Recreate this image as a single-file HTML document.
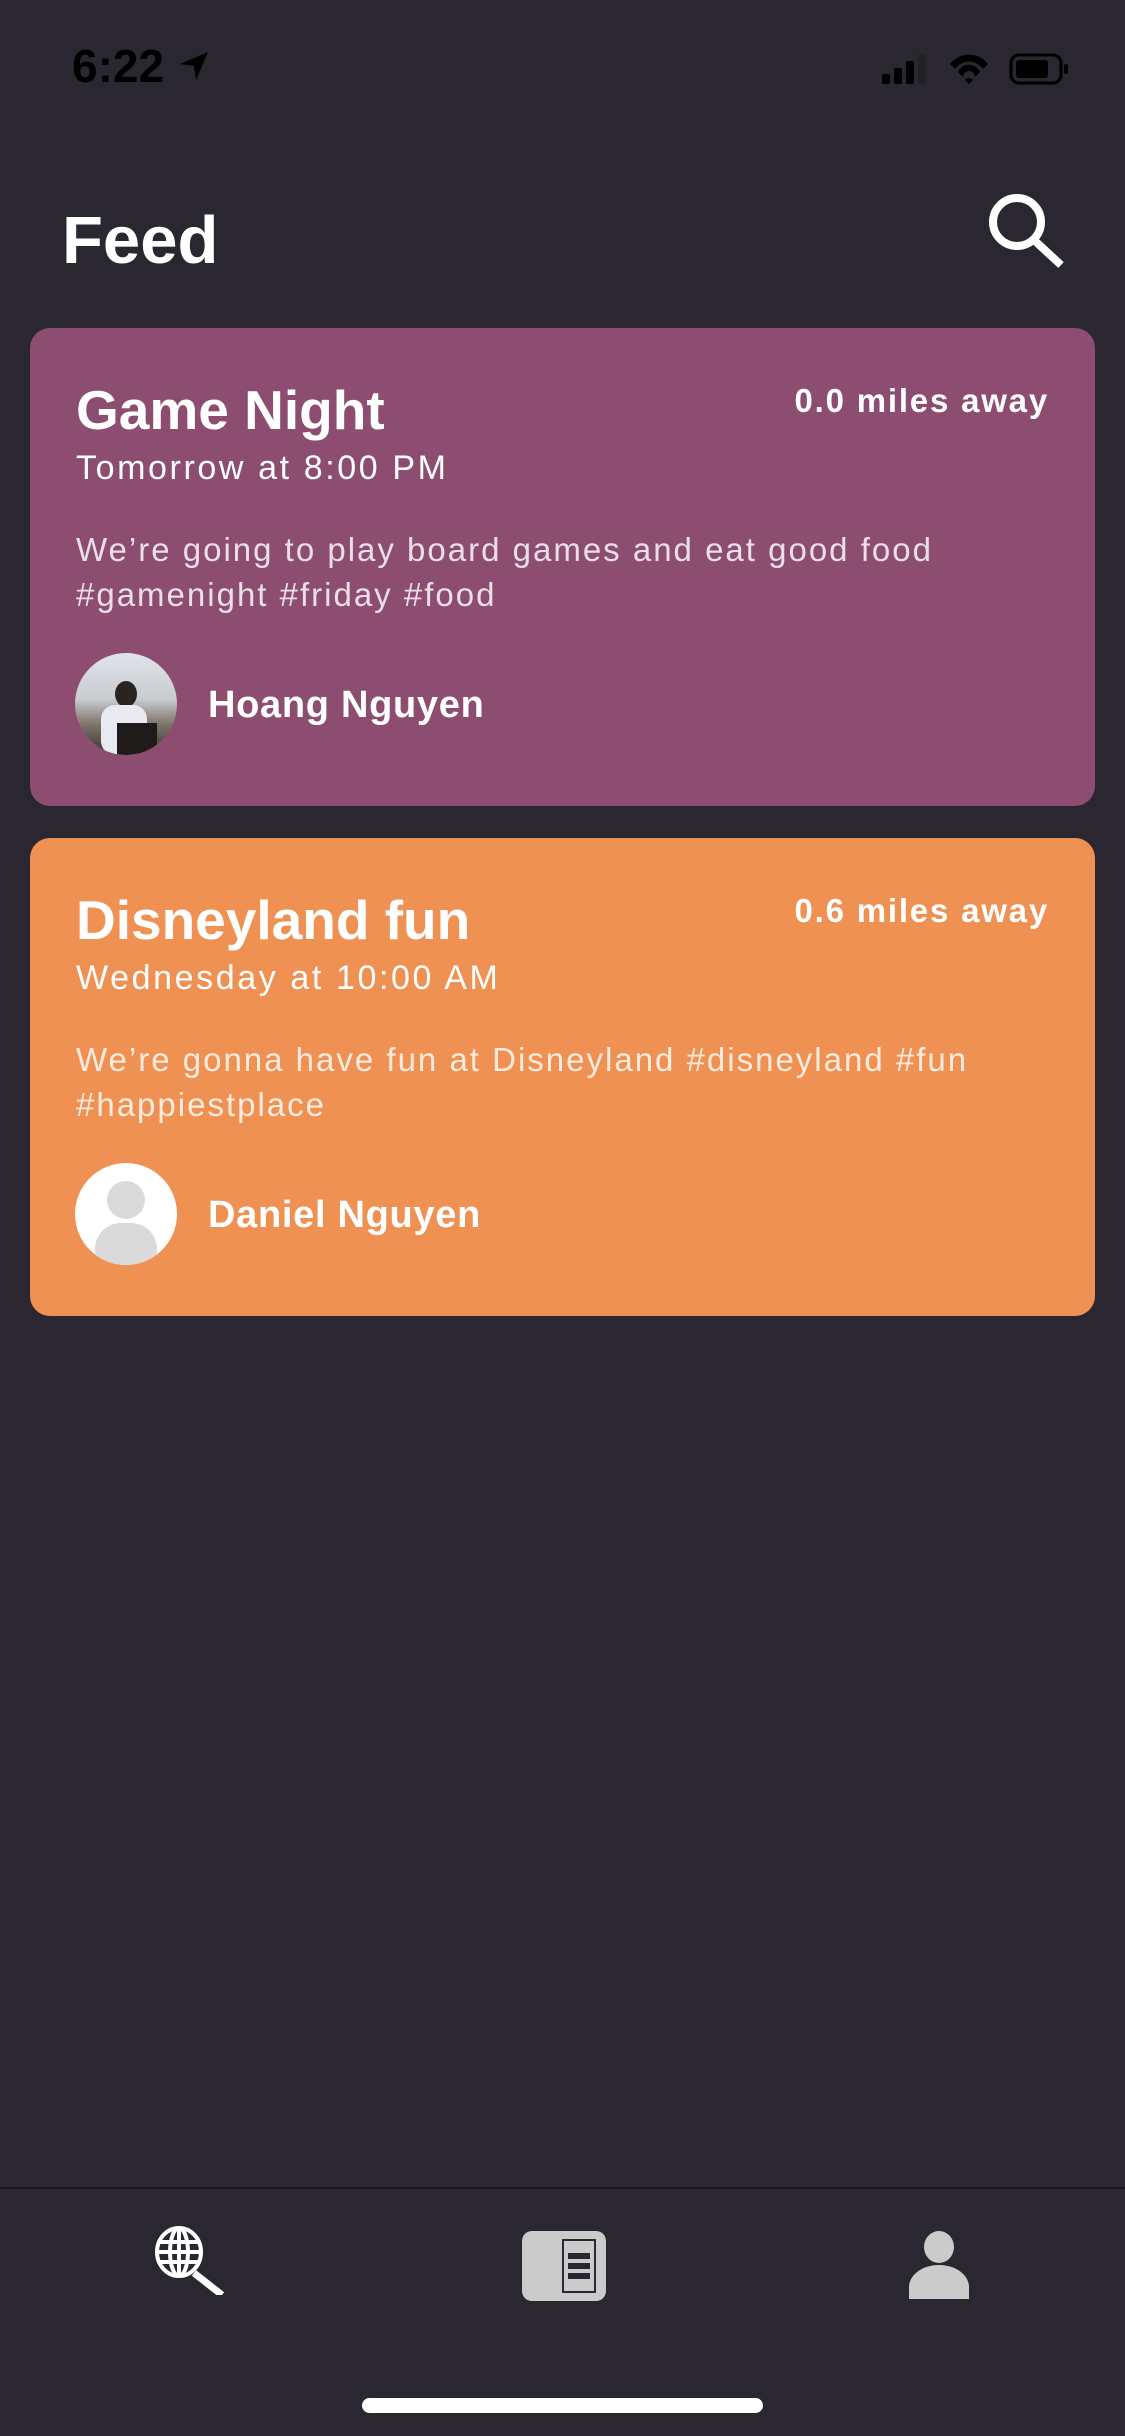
<!DOCTYPE html>
<html><head><meta charset="utf-8"><style>
*{margin:0;padding:0;box-sizing:border-box}
body{width:1125px;height:2436px;background:#2a2731;position:relative;overflow:hidden;font-family:"Liberation Sans",sans-serif;color:#fff}
.a{position:absolute;white-space:nowrap}
.card{position:absolute;left:30px;width:1065px;height:478px;border-radius:20px}
.t{left:76px;font-size:55px;font-weight:bold;line-height:55px}
.d{left:76px;font-size:34px;line-height:34px;letter-spacing:2.6px}
.m{right:76px;font-size:33px;font-weight:bold;line-height:33px;letter-spacing:1.8px}
.p{left:76px;font-size:33px;line-height:45px;color:rgba(255,255,255,.82);letter-spacing:2px}
.n{left:208px;font-size:38px;font-weight:bold;line-height:38px;letter-spacing:0.7px}
.av{position:absolute;left:75px;width:102px;height:102px;border-radius:50%;overflow:hidden}
</style></head><body>
<div class="a" style="left:72px;top:43px;font-size:46px;line-height:46px;color:#000;font-weight:bold">6:22</div>
<svg class="a" style="left:178px;top:50px" width="32" height="32" viewBox="0 0 32 32"><path d="M30 2 L2 14 L16 16 L18 30 Z" fill="#000"/></svg>
<svg class="a" style="left:880px;top:52px" width="200" height="34" viewBox="0 0 200 34">
<rect x="2" y="22" width="8" height="10" rx="2" fill="#000"/><rect x="14" y="16" width="8" height="16" rx="2" fill="#000"/><rect x="26" y="9" width="8" height="23" rx="2" fill="#000"/><rect x="38" y="2" width="8" height="30" rx="2" fill="#222"/>
<path d="M70 12 A24 24 0 0 1 108 12 L103 17 A17 17 0 0 0 75 17 Z M78 20 A12 12 0 0 1 100 20 L95 25 A6 6 0 0 0 83 25 Z M89 32 L85 28 A5 5 0 0 1 93 28 Z" fill="#000"/>
<rect x="131" y="3" width="50" height="28" rx="8" fill="none" stroke="#000" stroke-width="3"/><rect x="136" y="8" width="32" height="18" rx="3" fill="#000"/><rect x="184" y="12" width="4" height="10" rx="2" fill="#000"/>
</svg>
<div class="a" style="left:62px;top:207px;font-size:67px;line-height:67px;font-weight:bold">Feed</div>
<svg class="a" style="left:985px;top:190px" width="82" height="80" viewBox="0 0 82 80"><circle cx="32" cy="32" r="24" fill="none" stroke="#fff" stroke-width="8"/><path d="M49 50 L76 75" stroke="#fff" stroke-width="8"/></svg>

<div class="card" style="top:328px;background:#8c4d70"></div>
<div class="a t" style="top:383px">Game Night</div>
<div class="a m" style="top:384px">0.0 miles away</div>
<div class="a d" style="top:451px">Tomorrow at 8:00 PM</div>
<div class="a p" style="top:527px">We’re going to play board games and eat good food<br>#gamenight #friday #food</div>
<div class="av" style="top:653px;background:linear-gradient(180deg,#dfe4ea 0%,#c9ccd0 45%,#7d746a 70%,#3a322c 100%)"><div style="position:absolute;left:40px;top:28px;width:22px;height:26px;border-radius:50%;background:#2a2420"></div><div style="position:absolute;left:26px;top:52px;width:46px;height:50px;border-radius:14px;background:#e9eaf1"></div><div style="position:absolute;left:42px;top:70px;width:40px;height:32px;background:#1e1b1a"></div></div>
<div class="a n" style="top:686px">Hoang Nguyen</div>

<div class="card" style="top:838px;background:#f09154"></div>
<div class="a t" style="top:893px">Disneyland fun</div>
<div class="a m" style="top:894px">0.6 miles away</div>
<div class="a d" style="top:961px">Wednesday at 10:00 AM</div>
<div class="a p" style="top:1037px">We’re gonna have fun at Disneyland #disneyland #fun<br>#happiestplace</div>
<div class="av" style="top:1163px;background:#fff"><div style="position:absolute;left:32px;top:18px;width:38px;height:38px;border-radius:50%;background:#dadada"></div><div style="position:absolute;left:20px;top:60px;width:62px;height:50px;border-radius:26px 26px 0 0;background:#dadada"></div></div>
<div class="a n" style="top:1196px">Daniel Nguyen</div>

<div class="a" style="left:0;top:2187px;width:1125px;height:2px;background:#1c1a20"></div>
<svg class="a" style="left:152px;top:2225px" width="75" height="70" viewBox="0 0 75 70"><g fill="none" stroke="#fff" stroke-width="4"><ellipse cx="27" cy="27" rx="22" ry="24"/><ellipse cx="27" cy="27" rx="9" ry="24"/><path d="M27 3 V51 M6 17 H48 M4 27 H50 M6 37 H48"/></g><path d="M42 48 L70 70" stroke="#fff" stroke-width="7"/></svg>
<svg class="a" style="left:522px;top:2231px" width="84" height="70" viewBox="0 0 84 70"><rect x="0" y="0" width="84" height="70" rx="10" fill="#cbcbcb"/><rect x="40" y="8" width="34" height="54" fill="#2a2731"/><rect x="42" y="10" width="30" height="50" fill="#cbcbcb"/><rect x="46" y="22" width="22" height="6" fill="#2a2731"/><rect x="46" y="32" width="22" height="6" fill="#2a2731"/><rect x="46" y="42" width="22" height="6" fill="#2a2731"/></svg>
<svg class="a" style="left:907px;top:2231px" width="64" height="68" viewBox="0 0 64 68"><ellipse cx="32" cy="16" rx="15" ry="16" fill="#cbcbcb"/><path d="M2 68 V56 A30 22 0 0 1 62 56 V68 Z" fill="#cbcbcb"/></svg>
<div class="a" style="left:362px;top:2398px;width:401px;height:15px;border-radius:8px;background:#fff"></div>
</body></html>
